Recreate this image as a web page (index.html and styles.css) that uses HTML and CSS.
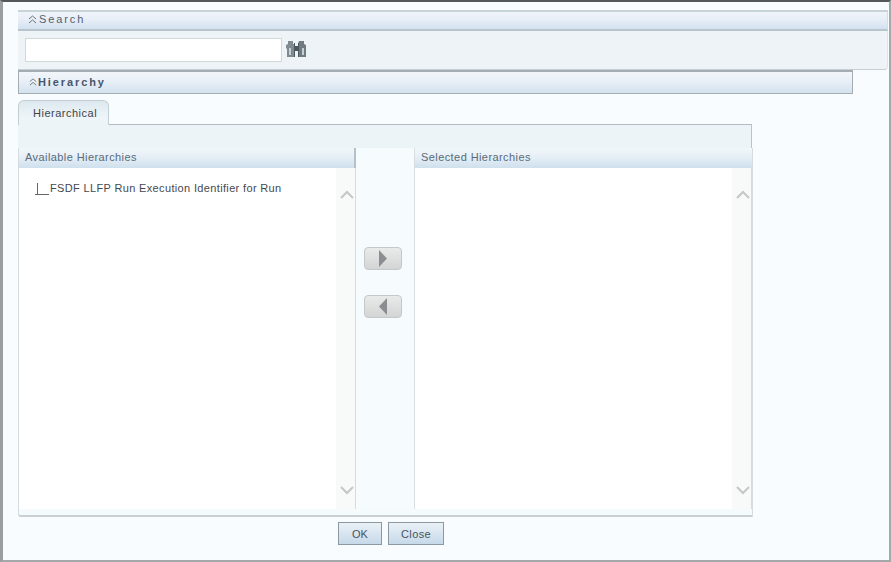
FILE: index.html
```html
<!DOCTYPE html>
<html lang="en">
<head>
<meta charset="utf-8">
<title>Hierarchy Browser</title>
<link rel="stylesheet" href="styles.css">
</head>
<body>
<div class="window">
  <div class="bar bar-search">
    <svg class="chev" width="9" height="9" viewBox="0 0 9 9" aria-hidden="true"><path d="M1 4l3.500-3L8 4M1 8l3.500-3L8 8"/></svg>
    <span class="bar-title">Search</span>
  </div>
  <div class="search-body">
    <div class="search-input"></div>
    <svg class="binoculars" width="23" height="18" viewBox="0 0 23 18" aria-hidden="true">
      <path d="M3 1h5v3h2v13H2V9L1 8V5l2-1z" fill="#7f8b91"/>
      <path d="M14 1h5v3l2 1v12h-8V4z" fill="#6f7b81"/>
      <path d="M9 6h5v5H9z" fill="#4c585e"/>
      <path d="M9 3h1v14H9zM13 3h1v14h-1z" fill="#4c585e"/>
      <path d="M4 8h2v7H4zM17 8h2v7h-2z" fill="#c5d0d5"/>
    </svg>
  </div>
  <div class="bar bar-hier">
    <svg class="chev chev-small" width="8" height="8" viewBox="0 0 9 9" aria-hidden="true"><path d="M1 4l3.500-3L8 4M1 8l3.500-3L8 8"/></svg>
    <span class="bar-title bold">Hierarchy</span>
  </div>
  <div class="tabs">
    <div class="tab">Hierarchical</div>
    <div class="tab-rest"></div>
  </div>
  <div class="tab-panel"></div>
  <div class="shuttle">
    <div class="col col-left">
      <div class="col-head">Available Hierarchies</div>
      <div class="col-body">
        <div class="tree">
          <svg class="tree-line" width="16" height="14" viewBox="0 0 16 14" aria-hidden="true"><path d="M3.500 1v11M1 12.500h14" stroke="#666" fill="none"/></svg>
          <span>FSDF LLFP Run Execution Identifier for Run</span>
        </div>
        <div class="scroll">
          <svg width="14" height="9" viewBox="0 0 14 9" aria-hidden="true"><path d="M1 8l6-6 6 6" class="chevron"/></svg>
          <svg width="14" height="9" viewBox="0 0 14 9" aria-hidden="true"><path d="M1 1l6 6 6-6" class="chevron"/></svg>
        </div>
      </div>
    </div>
    <div class="mid">
      <div class="move"><svg width="10" height="17" viewBox="0 0 10 17" aria-hidden="true"><path d="M1 0l8 8.500-8 8.500z" fill="#8a8e90"/></svg></div>
      <div class="move"><svg width="10" height="17" viewBox="0 0 10 17" aria-hidden="true"><path d="M9 0L1 8.500 9 17z" fill="#8a8e90"/></svg></div>
    </div>
    <div class="col col-right">
      <div class="col-head">Selected Hierarchies</div>
      <div class="col-body">
        <div class="tree"></div>
        <div class="scroll">
          <svg width="14" height="9" viewBox="0 0 14 9" aria-hidden="true"><path d="M1 8l6-6 6 6" class="chevron"/></svg>
          <svg width="14" height="9" viewBox="0 0 14 9" aria-hidden="true"><path d="M1 1l6 6 6-6" class="chevron"/></svg>
        </div>
      </div>
    </div>
  </div>
  <div class="actions">
    <div class="btn btn-ok">OK</div>
    <div class="btn btn-close">Close</div>
  </div>
</div>
</body>
</html>
```
FILE: styles.css
```css
* { box-sizing: border-box; }
html, body { margin: 0; padding: 0; }
body { width: 891px; height: 562px; overflow: hidden; background: #f8fcff; font-family: "Liberation Sans", Arial, sans-serif; color: #4a4f55; }
.window {
  width: 891px; height: 562px;
  border-top: 2px solid #55585a;
  border-left: 3px solid #9a9ea1;
  border-right: 2px solid #a5a9ab;
  border-bottom: 2px solid #a5a8aa;
  padding: 8px 0 0 15px;
  display: flex; flex-direction: column;
  background: #f8fcff;
}
.bar { display: flex; align-items: center; padding-left: 10px; background: linear-gradient(#f2f6fa 0%, #e8eff6 45%, #d3e2ef 100%); }
.bar-search { height: 21px; margin-right: 1px; padding-bottom: 3px; border-top: 2px solid #c9d4da; border-bottom: 2px solid #b8c5cd; border-right: 1px solid #d5dce4; background: linear-gradient(#f0f5fa 0%, #e8eef7 45%, #d3e1f0 100%); }
.bar-hier { width: 835px; height: 24px; padding-bottom: 2px; border: 1px solid #a3adb3; border-top-width: 2px; }
.chev { flex: none; margin-right: 2px; }
.chev path { fill: none; stroke: #6b7278; stroke-width: 1; }
.chev-small { margin-right: 1px; }
.bar-title { font-size: 11px; letter-spacing: 1.9px; color: #52606e; }
.bold { font-weight: bold; color: #48566a; letter-spacing: 1.9px; }
.search-body { height: 39px; margin-right: 1px; display: flex; align-items: flex-start; padding: 7px 0 0 7px; background: #edf3f7; border-bottom: 1px solid #c7ced2; border-right: 1px solid #dfe5ea; border-bottom-right-radius: 4px; }
.search-input { width: 257px; height: 24px; background: #fff; border: 1px solid #d3d9d4; }
.binoculars { margin: 2px 0 0 3px; }
.tabs { height: 31px; display: flex; align-items: flex-end; width: 734px; }
.tab { width: 91px; height: 25px; padding: 6px 0 0 14px; font-size: 11px; letter-spacing: 0.5px; color: #3f444a; border: 1px solid #c3ced3; border-bottom: 0; border-radius: 6px 6px 0 0; background: linear-gradient(#dde9ef, #eef5f9 70%, #edf4f8); }
.tab-rest { flex: 1; height: 1px; background: #b3bcc2; }
.tab-panel { width: 734px; height: 23px; background: #ecf4f7; border-right: 1px solid #b9c3c8; }
.shuttle { width: 735px; height: 369px; display: flex; border-bottom: 2px solid #c9d0d4; border-right: 1px solid #d5dbde; border-left: 1px solid #d5dbde; border-bottom-left-radius: 3px; background: #f5fbfd; padding-bottom: 6px; }
.col { display: flex; flex-direction: column; }
.col-left { width: 337px; }
.col-right { width: 337px; }
.col-head { height: 20px; flex: none; padding: 3px 0 0 6px; font-size: 11px; letter-spacing: 0.42px; color: #5a6a78; background: linear-gradient(#f2f7fb 0%, #e6eff6 45%, #cfe0ed 100%); }
.col-left .col-head { border-right: 2px solid #b7c0c6; }
.col-body { flex: 1; display: flex; background: #fff; border-right: 1px solid #d8dadb; }
.tree { flex: 1; display: flex; align-items: flex-start; padding: 14px 0 0 15px; font-size: 11px; letter-spacing: 0.35px; color: #44494f; }
.scroll { width: 19px; flex: none; display: flex; flex-direction: column; justify-content: space-between; align-items: center; padding: 22px 0 14px 3px; background: #f8f9f9; }
.chevron { fill: none; stroke: #c4c6c7; stroke-width: 2; }
.mid { width: 59px; display: flex; flex-direction: column; align-items: flex-start; padding: 99px 0 0 8px; gap: 25px; background: #f6fbfe; border-right: 1px solid #d9dddf; }
.move { width: 38px; height: 23px; display: flex; align-items: center; justify-content: center; border: 1px solid #c5c8c9; border-radius: 4px; background: linear-gradient(#e9eaea, #d3d5d5); }
.actions { display: flex; gap: 6px; padding: 5px 0 0 320px; }
.btn { height: 23px; padding-top: 5px; text-align: center; font-size: 11px; color: #48535e; border: 1px solid #8b99a3; background: linear-gradient(#eaf1f6, #c6d9e9); }
.btn-ok { width: 44px; }
.btn-close { width: 56px; letter-spacing: 0.4px; }
```
